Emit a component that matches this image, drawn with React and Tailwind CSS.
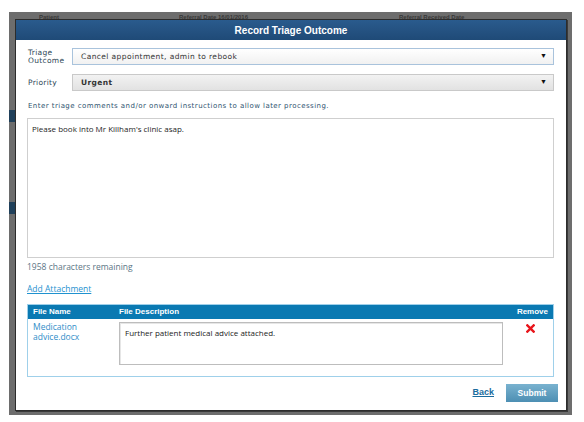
import React from "react";

const label = { fontFamily: '"DejaVu Sans", Verdana, sans-serif' };
const body = { fontFamily: '"Open Sans", "Noto Sans", Arial, sans-serif' };
const head = { fontFamily: '"Liberation Sans", Arial, sans-serif' };

function Select({ value, focused, bold }) {
  return (
    <div
      className={`flex-1 h-[17px] flex items-center justify-between pl-[8px] pr-[6px] border ${
        focused
          ? "border-[#a9c3dc] bg-gradient-to-b from-white to-[#f1f1f1]"
          : "border-[#c9c9c9] bg-gradient-to-b from-[#f2f2f2] to-[#e2e2e2]"
      }`}
    >
      <span
        className={`text-[7.5px] text-[#333] tracking-[0.4px] ${bold ? "font-semibold" : ""}`}
        style={label}
      >
        {value}
      </span>
      <span className="text-[7px] text-[#111]">▼</span>
    </div>
  );
}

function RedX() {
  return (
    <svg width="9" height="9" viewBox="0 0 10 10">
      <path d="M1.5 1.5 L8.5 8.5 M8.5 1.5 L1.5 8.5" stroke="#e8151b" strokeWidth="2.6" strokeLinecap="square" />
    </svg>
  );
}

export default function App() {
  return (
    <div className="w-[584px] h-[422px] bg-white overflow-hidden">
      <div className="mt-[12px] ml-[9px] w-[563px] h-[403px] bg-[#6d6d6d] relative pt-[7px] pl-[6px]">
        {/* faint page behind the overlay */}
        <div className="absolute left-[30px] top-[1px] text-[6px] font-bold text-[#222] opacity-70" style={head}>
          Patient
        </div>
        <div className="absolute left-[170px] top-[1px] text-[6px] font-bold text-[#222] opacity-70" style={head}>
          Referral Date 16/01/2016
        </div>
        <div className="absolute left-[390px] top-[1px] text-[6px] font-bold text-[#222] opacity-70" style={head}>
          Referral Received Date
        </div>
        <div className="absolute left-0 top-[98px] w-[6px] h-[12px] bg-[#20405a]" />
        <div className="absolute left-0 top-[190px] w-[6px] h-[12px] bg-[#20405a]" />
        <div className="absolute right-[5px] top-[100px] w-[6px] h-[14px] bg-[#20405a]" />
        <div className="absolute right-[5px] top-[190px] w-[6px] h-[12px] bg-[#20405a]" />

        <div className="relative w-[552px] h-[392px] bg-white border border-[#2c2c2c] shadow-[1px_1px_0_#3a3a3a] flex flex-col">
          <div
            className="h-[20px] shrink-0 flex items-center justify-center bg-gradient-to-b from-[#2a5b8d] to-[#1f4a77] text-white text-[10px] font-bold"
            style={head}
          >
            Record Triage Outcome
          </div>

          <div className="flex-1 flex flex-col pl-[11px] pr-[12px] pt-[8px]">
            <div className="flex items-center h-[17px]">
              <div className="w-[45px] pl-[1px] text-[7.5px] leading-[8px] text-[#2f4757] tracking-[0.3px]" style={label}>
                Triage
                <br />
                Outcome
              </div>
              <Select value="Cancel appointment, admin to rebook" focused />
            </div>
            <div className="flex items-center h-[17px] mt-[9px]">
              <div className="w-[45px] pl-[1px] text-[7.5px] text-[#2f4757] tracking-[0.3px]" style={label}>
                Priority
              </div>
              <Select value="Urgent" bold />
            </div>

            <div className="mt-[10px] pl-[1px] text-[7px] text-[#2f5470] tracking-[0.45px]" style={label}>
              Enter triage comments and/or onward instructions to allow later processing.
            </div>

            <div className="mt-[6px] h-[140px] border border-[#cfcfcf] px-[4px] pt-[4px] text-[8px] text-[#1e1e1e]" style={body}>
              Please book into Mr Killham's clinic asap.
            </div>

            <div className="mt-[3px] text-[8.5px] text-[#5b7585]" style={body}>
              1958 characters remaining
            </div>

            <div className="mt-[10px] text-[8.5px] text-[#1f92cf] underline" style={body}>
              Add Attachment
            </div>

            <div className="mt-[8px] border border-[#9fd0ea]">
              <div className="h-[14px] bg-[#0a79b2] flex items-center text-white text-[8px] font-bold" style={head}>
                <div className="w-[91px] pl-[5px]">File Name</div>
                <div className="flex-1">File Description</div>
                <div className="pr-[5px]">Remove</div>
              </div>
              <div className="flex h-[57px] pt-[3px]">
                <div className="w-[91px] pl-[5px] text-[8.5px] leading-[10px] text-[#2f8dc8]" style={body}>
                  Medication
                  <br />
                  advice.docx
                </div>
                <div
                  className="w-[384px] h-[43px] border border-[#bdbdbd] shadow-[inset_1px_1px_0_#e6e6e6] px-[5px] pt-[4px] text-[8px] text-[#222]"
                  style={body}
                >
                  Further patient medical advice attached.
                </div>
                <div className="flex-1 flex justify-center pl-[4px] pt-[2px]">
                  <RedX />
                </div>
              </div>
            </div>

            <div className="mt-[7px] flex items-center justify-end gap-[12px] mr-[-4px]">
              <span className="text-[9px] font-bold text-[#1b6c9e] underline" style={head}>
                Back
              </span>
              <div
                className="w-[52px] h-[18px] flex items-center justify-center bg-gradient-to-b from-[#79b2cf] to-[#4d8fb3] text-white text-[8.5px] font-bold"
                style={head}
              >
                Submit
              </div>
            </div>
          </div>
        </div>
      </div>
    </div>
  );
}
